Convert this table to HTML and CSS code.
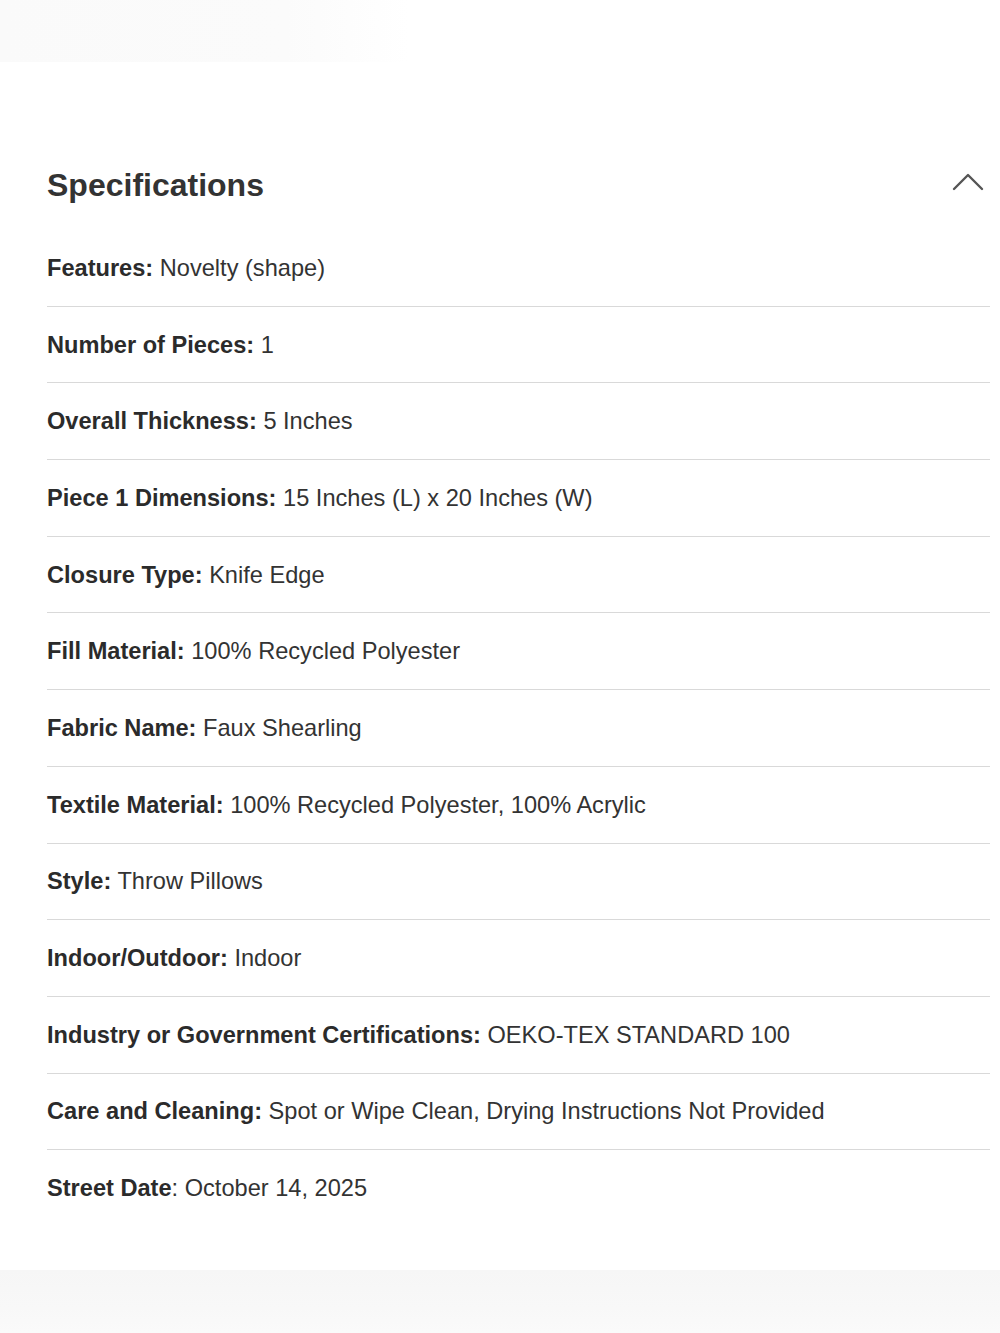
FILE: index.html
```html
<!DOCTYPE html>
<html lang="en">
<head>
<meta charset="utf-8">
<title>Specifications</title>
<link rel="stylesheet" href="styles.css">
</head>
<body>
<div class="top-band"></div>
<section class="specs">
  <header class="specs-head">
    <h2 class="specs-title">Specifications</h2>
    <svg class="chevron" width="34" height="20" viewBox="0 0 34 20" aria-hidden="true">
      <polyline points="3,17 17,3 31,17" fill="none" stroke="#555" stroke-width="2.4" stroke-linecap="round" stroke-linejoin="round"/>
    </svg>
  </header>
  <ul class="spec-list">
    <li class="spec-row"><b>Features:</b> Novelty (shape)</li>
    <li class="spec-row"><b>Number of Pieces:</b> 1</li>
    <li class="spec-row"><b>Overall Thickness:</b> 5 Inches</li>
    <li class="spec-row"><b>Piece 1 Dimensions:</b> 15 Inches (L) x 20 Inches (W)</li>
    <li class="spec-row"><b>Closure Type:</b> Knife Edge</li>
    <li class="spec-row"><b>Fill Material:</b> 100% Recycled Polyester</li>
    <li class="spec-row"><b>Fabric Name:</b> Faux Shearling</li>
    <li class="spec-row"><b>Textile Material:</b> 100% Recycled Polyester, 100% Acrylic</li>
    <li class="spec-row"><b>Style:</b> Throw Pillows</li>
    <li class="spec-row"><b>Indoor/Outdoor:</b> Indoor</li>
    <li class="spec-row"><b>Industry or Government Certifications:</b> OEKO-TEX STANDARD 100</li>
    <li class="spec-row"><b>Care and Cleaning:</b> Spot or Wipe Clean, Drying Instructions Not Provided</li>
    <li class="spec-row"><b>Street Date</b>: October 14, 2025</li>
  </ul>
</section>
<div class="bottom-band"></div>
</body>
</html>
```
FILE: styles.css
```css
html, body {
  margin: 0;
  padding: 0;
  background: #fff;
}
body {
  width: 1000px;
  height: 1333px;
  overflow: hidden;
  font-family: "Liberation Sans", Arial, sans-serif;
  color: #333;
  display: flex;
  flex-direction: column;
}
.top-band {
  height: 62px;
  width: 410px;
  background: linear-gradient(90deg, #fafafa 0%, #fbfbfb 70%, #fff 100%);
  flex: none;
}
.specs {
  flex: 1;
  padding: 103px 10px 0 47px;
}
.specs-head {
  display: flex;
  align-items: center;
  justify-content: space-between;
  height: 40px;
  margin-bottom: 25px;
}
.specs-title {
  margin: 0;
  font-size: 32px;
  line-height: 40px;
  font-weight: bold;
  color: #333;
}
.chevron {
  margin-right: 5px;
  margin-top: -6px;
}
.spec-list {
  list-style: none;
  margin: 0;
  padding: 0;
}
.spec-row {
  font-size: 23.6px;
  line-height: 26px;
  padding: 24.85px 0;
  border-bottom: 1px solid #d9d9d9;
  color: #333;
}
.spec-row b {
  color: #2b2b2b;
}
.spec-row:last-child {
  border-bottom: none;
}
.bottom-band {
  height: 63px;
  flex: none;
  background: linear-gradient(180deg, #f6f6f6 0%, #f8f8f8 60%, #fafafa 100%);
}
```
